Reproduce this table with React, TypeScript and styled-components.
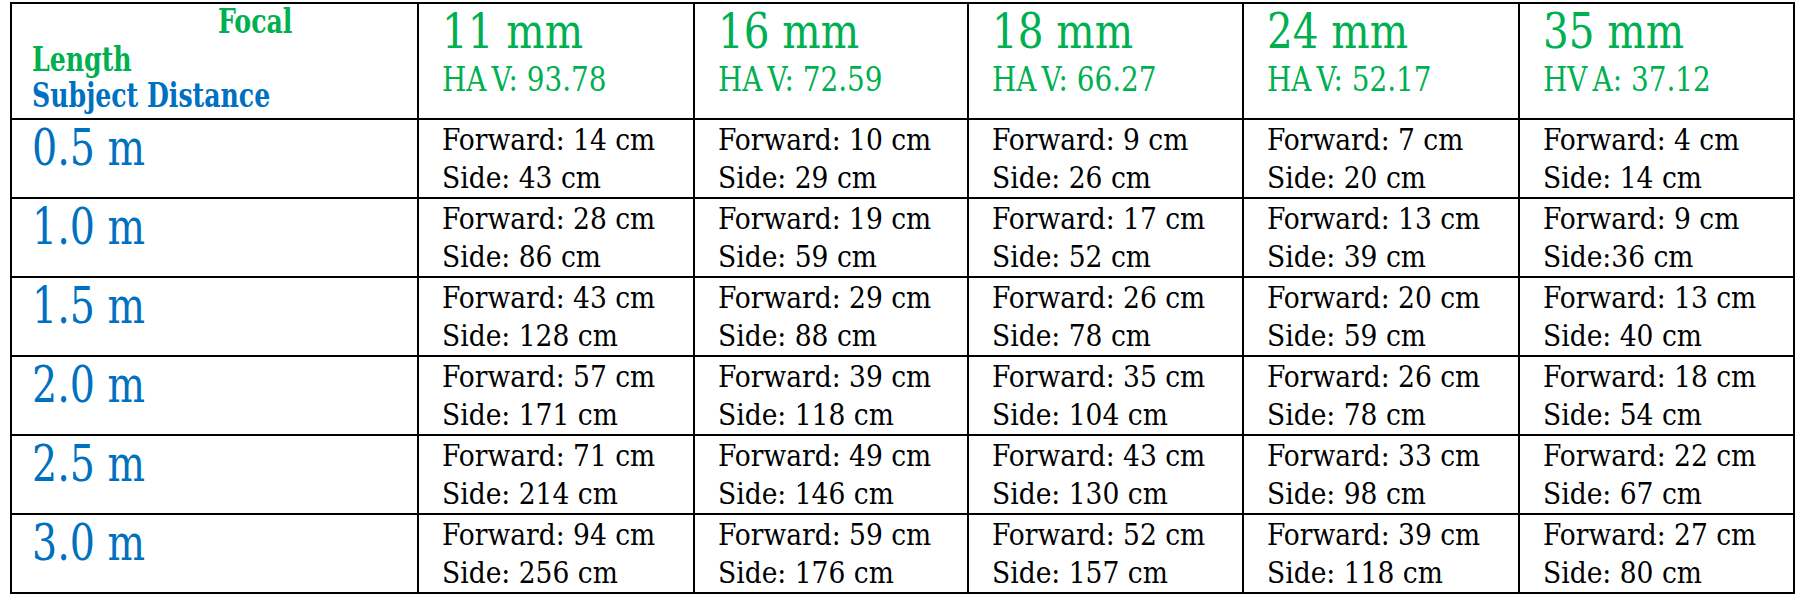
import styled, { createGlobalStyle, css } from "styled-components";

const GREEN = "#00b050";
const BLUE = "#0070c0";

const GlobalStyle = createGlobalStyle`
  html, body {
    margin: 0;
    padding: 0;
    background: #ffffff;
  }
  body {
    font-family: "DejaVu Serif Condensed", "DejaVu Serif", serif;
    font-stretch: condensed;
  }
`;

/* text in the picture is a bit taller than the font at its width, so stretch it on the baseline */
const stretched = (size: number, lh: number, scale: number) => css`
  font-size: ${size}px;
  line-height: ${lh}px;
  transform: scaleY(${scale});
  transform-origin: 0 ${(lh - 1.164 * size) / 2 + 0.928 * size}px;
`;

const Page = styled.div`
  padding: 2px 0 0 10px;
`;

const Grid = styled.div`
  display: grid;
  grid-template-columns: 407px 276px 274px 275px 276px 275px;
  grid-template-rows: 116px repeat(6, 79px);
  width: max-content;
  border-left: 2px solid #000;
  border-top: 2px solid #000;
`;

const Cell = styled.div<{ $head?: boolean }>`
  border-right: 2px solid #000;
  border-bottom: 2px solid #000;
  padding: ${(p) => (p.$head ? "3px 0 0 23px" : "1px 0 0 23px")};
  white-space: nowrap;
`;

const CornerCell = styled(Cell)`
  padding: 0 0 0 20px;
  font-weight: bold;
`;

const Focal = styled.div`
  ${stretched(28, 40, 1.2)}
  color: ${GREEN};
  padding-left: 186px;
`;

const Length = styled.div`
  ${stretched(28, 36, 1.2)}
  color: ${GREEN};
`;

const Subject = styled.div`
  ${stretched(28, 36, 1.2)}
  color: ${BLUE};
`;

const LensTitle = styled.div`
  ${stretched(45, 52, 1.09)}
  color: ${GREEN};
`;

const AngleLabel = styled.div`
  ${stretched(31, 43, 1.06)}
  color: ${GREEN};
`;

const Kern = styled.span`
  letter-spacing: 5px;
`;

const DistanceCell = styled(Cell)`
  padding: 4px 0 0 20px;
`;

const Distance = styled.div`
  ${stretched(44, 52, 1.15)}
  color: ${BLUE};
`;

const Measure = styled.div`
  font-size: 29.5px;
  line-height: 38px;
  color: #000;
`;

const lenses = [
  { focal: "11 mm", tag: "HAV", angle: "93.78" },
  { focal: "16 mm", tag: "HAV", angle: "72.59" },
  { focal: "18 mm", tag: "HAV", angle: "66.27" },
  { focal: "24 mm", tag: "HAV", angle: "52.17" },
  { focal: "35 mm", tag: "HVA", angle: "37.12" },
];

const rows: { distance: string; cells: [string, string][] }[] = [
  {
    distance: "0.5 m",
    cells: [
      ["14", "Side: 43 cm"],
      ["10", "Side: 29 cm"],
      ["9", "Side: 26 cm"],
      ["7", "Side: 20 cm"],
      ["4", "Side: 14 cm"],
    ],
  },
  {
    distance: "1.0 m",
    cells: [
      ["28", "Side: 86 cm"],
      ["19", "Side: 59 cm"],
      ["17", "Side: 52 cm"],
      ["13", "Side: 39 cm"],
      ["9", "Side:36 cm"],
    ],
  },
  {
    distance: "1.5 m",
    cells: [
      ["43", "Side: 128 cm"],
      ["29", "Side: 88 cm"],
      ["26", "Side: 78 cm"],
      ["20", "Side: 59 cm"],
      ["13", "Side: 40 cm"],
    ],
  },
  {
    distance: "2.0 m",
    cells: [
      ["57", "Side: 171 cm"],
      ["39", "Side: 118 cm"],
      ["35", "Side: 104 cm"],
      ["26", "Side: 78 cm"],
      ["18", "Side: 54 cm"],
    ],
  },
  {
    distance: "2.5 m",
    cells: [
      ["71", "Side: 214 cm"],
      ["49", "Side: 146 cm"],
      ["43", "Side: 130 cm"],
      ["33", "Side: 98 cm"],
      ["22", "Side: 67 cm"],
    ],
  },
  {
    distance: "3.0 m",
    cells: [
      ["94", "Side: 256 cm"],
      ["59", "Side: 176 cm"],
      ["52", "Side: 157 cm"],
      ["39", "Side: 118 cm"],
      ["27", "Side: 80 cm"],
    ],
  },
];

const LensHeader = ({ lens }: { lens: (typeof lenses)[number] }) => (
  <Cell $head>
    <LensTitle>{lens.focal}</LensTitle>
    <AngleLabel>
      {lens.tag[0]}
      <Kern>{lens.tag[1]}</Kern>
      {lens.tag[2]}: {lens.angle}
    </AngleLabel>
  </Cell>
);

export default function App() {
  return (
    <Page>
      <GlobalStyle />
      <Grid>
        <CornerCell>
          <Focal>Focal</Focal>
          <Length>Length</Length>
          <Subject>Subject Distance</Subject>
        </CornerCell>
        {lenses.map((lens) => (
          <LensHeader key={lens.focal} lens={lens} />
        ))}
        {rows.map((row) => [
          <DistanceCell key={row.distance}>
            <Distance>{row.distance}</Distance>
          </DistanceCell>,
          ...row.cells.map(([forward, side], i) => (
            <Cell key={row.distance + i}>
              <Measure>Forward: {forward} cm</Measure>
              <Measure>{side}</Measure>
            </Cell>
          )),
        ])}
      </Grid>
    </Page>
  );
}
